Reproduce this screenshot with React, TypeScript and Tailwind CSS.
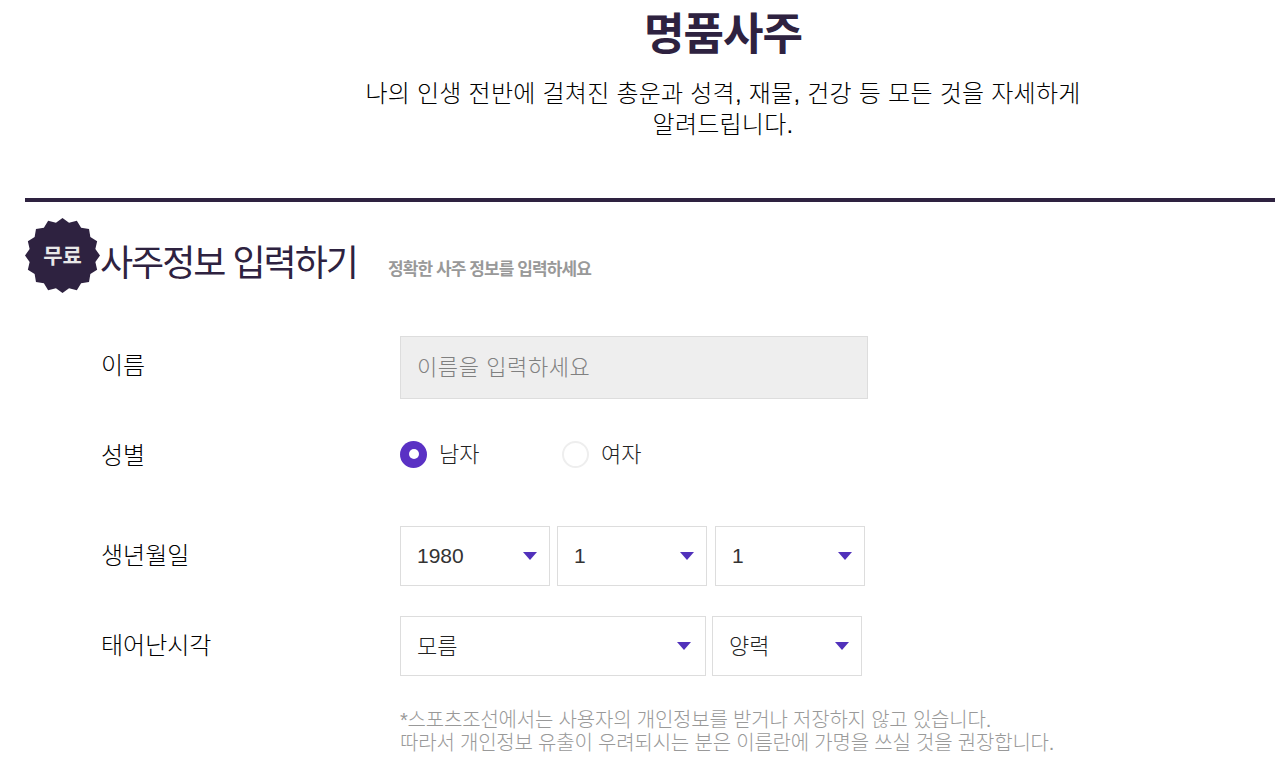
const font = { fontFamily: '"Liberation Sans", "Noto Sans CJK KR", sans-serif' };

function Badge() {
  // scalloped seal behind the 무료 label
  const points: string[] = [];
  const n = 16;
  for (let i = 0; i < n * 2; i++) {
    const r = i % 2 === 0 ? 37.5 : 33.5;
    const a = (Math.PI * i) / n;
    points.push(`${37.5 + r * Math.cos(a)},${37.5 + r * Math.sin(a)}`);
  }
  return (
    <div className="relative h-[75px] w-[75px] shrink-0">
      <svg width="75" height="75" viewBox="0 0 75 75" className="block">
        <polygon points={points.join(' ')} fill="#2e2240" />
      </svg>
      <span className="absolute inset-0 flex items-center justify-center text-[21px] font-bold text-[#e8e8e8]">
        무료
      </span>
    </div>
  );
}

function Select({ value, width, textSize = 'text-[22px] font-light text-[#222222]', arrowRight = 'right-[12px]' }: { value: string; width: string; textSize?: string; arrowRight?: string }) {
  return (
    <div className={`relative flex h-[60px] items-center border border-[#dddddd] pl-4 ${textSize} ${width}`}>
      {value}
      <span className={`absolute top-[25px] h-0 w-0 border-x-[7.5px] border-t-[8px] border-x-transparent border-t-[#5131bb] ${arrowRight}`} />
    </div>
  );
}

function Row({ label, className, labelClass = '', children }: { label: string; className: string; labelClass?: string; children: React.ReactNode }) {
  return (
    <div className={`flex items-center ${className}`}>
      <div className={`w-[299px] shrink-0 text-[24px] font-light text-black ${labelClass}`}>{label}</div>
      {children}
    </div>
  );
}

export default function App() {
  return (
    <div className="h-[764px] overflow-hidden bg-white pl-[25px]" style={font}>
      <header className="ml-[325px] flex h-[198px] w-[746px] flex-col items-center">
        <h1 className="mt-[5px] text-[44px] leading-[60px] font-bold tracking-[-1px] text-[#2e2240]">명품사주</h1>
        <p className="mt-[13px] w-[725px] text-center text-[24px] leading-[31px] font-light tracking-[0.25px] text-black">
          나의 인생 전반에 걸쳐진 총운과 성격, 재물, 건강 등 모든 것을 자세하게 알려드립니다.
        </p>
      </header>
      <div className="h-1 bg-[#2e2240]" />
      <div className="mt-[16px] flex items-start">
        <Badge />
        <h2 className="mt-[8px] text-[36px] leading-[76px] tracking-[-2px] text-[#2e2240]">사주정보 입력하기</h2>
        <span className="mt-[40px] ml-[31px] text-[17px] leading-[24px] font-bold tracking-[-0.9px] text-[#999999]">정확한 사주 정보를 입력하세요</span>
      </div>
      <div className="mt-[34px] pl-[76px]">
        <Row label="이름" className="h-[63px]" labelClass="-mt-[3px]">
          <div className="flex h-[63px] w-[468px] items-center border border-[#dddddd] bg-[#eeeeee] pl-4 text-[22px] font-light tracking-[0.6px] text-[#808080]">
            이름을 입력하세요
          </div>
        </Row>
        <Row label="성별" className="mt-[37px] h-[36px]" labelClass="mt-[4px]">
          <div className="flex items-center text-[22px] font-light text-[#222222]">
            <span className="flex h-[27px] w-[27px] items-center justify-center rounded-full bg-[#5a31c4]">
              <span className="h-[10px] w-[10px] rounded-full bg-white" />
            </span>
            <span className="ml-[12px] w-[123px]">남자</span>
            <span className="h-[27px] w-[27px] rounded-full border-2 border-[#eeeeee]" />
            <span className="ml-[12px]">여자</span>
          </div>
        </Row>
        <Row label="생년월일" className="mt-[54px] h-[60px]">
          <div className="flex gap-[7px]">
            <Select value="1980" width="w-[150px]" textSize="text-[21px] text-[#333333]" />
            <Select value="1" width="w-[150px]" textSize="text-[21px] text-[#333333]" />
            <Select value="1" width="ml-px w-[150px]" textSize="text-[21px] text-[#333333]" />
          </div>
        </Row>
        <Row label="태어난시각" className="mt-[30px] h-[60px]">
          <div className="flex gap-[6px]">
            <Select value="모름" width="w-[306px]" arrowRight="right-[14px]" />
            <Select value="양력" width="w-[150px]" />
          </div>
        </Row>
        <p className="mt-[33px] ml-[299px] text-[20px] leading-[23px] font-light tracking-[-0.2px] text-[#999999]">
          *스포츠조선에서는 사용자의 개인정보를 받거나 저장하지 않고 있습니다.
          <br />
          따라서 개인정보 유출이 우려되시는 분은 이름란에 가명을 쓰실 것을 권장합니다.
        </p>
      </div>
    </div>
  );
}
